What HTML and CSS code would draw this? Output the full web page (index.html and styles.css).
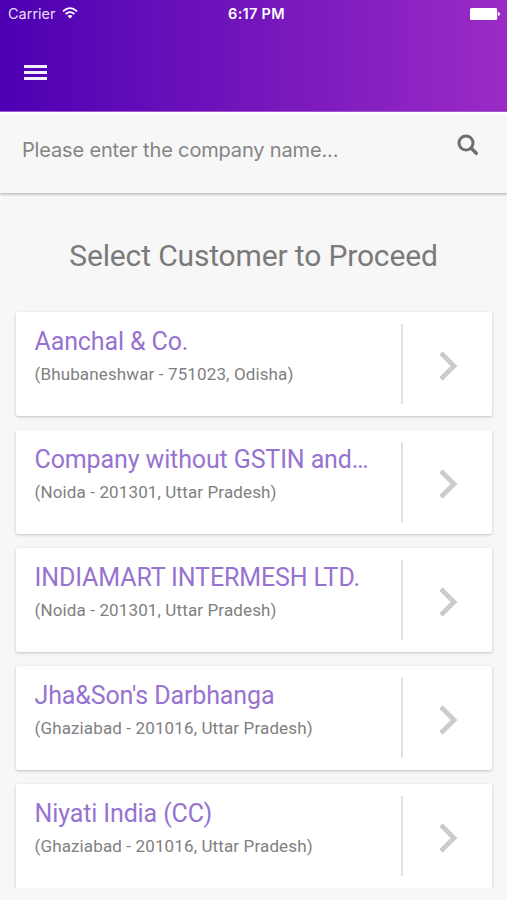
FILE: index.html
```html
<!DOCTYPE html>
<html lang="en">
<head>
<meta charset="utf-8">
<title>Select Customer</title>
<link rel="stylesheet" href="styles.css">
</head>
<body>
<svg class="symbols" aria-hidden="true">
  <symbol id="chevron" viewBox="0 0 20 30"><path d="M2 2L15 15L2 28" fill="none" stroke="currentColor" stroke-width="4.8"/></symbol>
</svg>
<header class="header">
  <div class="status">
    <div class="carrier"><span class="carrier-name">Carrier</span>
      <svg class="wifi" viewBox="0 0 16 12"><g fill="none" stroke="currentColor" stroke-width="1.8"><path d="M1 4.3Q8 -2 15 4.3"/><path d="M3.6 7Q8 3.2 12.4 7"/></g><path d="M5.5 8.9Q8 6.9 10.5 8.9L8 11.5Z" fill="currentColor"/></svg>
    </div>
    <time class="time">6:17 PM</time>
    <svg class="battery" viewBox="0 0 30 12"><rect width="27.2" height="12" rx="1.5" fill="currentColor"/><path d="M28 4Q30 4.4 30 6Q30 7.6 28 8Z" fill="currentColor"/></svg>
  </div>
  <button class="menu" aria-label="Menu"><span></span><span></span><span></span></button>
</header>
<form class="search">
  <span class="placeholder">Please enter the company name...</span>
  <svg class="search-icon" viewBox="0 0 22 22"><circle cx="9" cy="9" r="7" fill="none" stroke="currentColor" stroke-width="3"/><path d="M14 14L19.3 19.3" stroke="currentColor" stroke-width="3.4" stroke-linecap="round"/></svg>
</form>
<main class="content">
  <h1 class="heading">Select Customer to Proceed</h1>
  <ul class="list">
    <li class="card"><div class="info"><h2 class="name">Aanchal &amp; Co.</h2><p class="place">(Bhubaneshwar - 751023, Odisha)</p></div><div class="go"><svg class="chevron"><use href="#chevron"/></svg></div></li>
    <li class="card"><div class="info"><h2 class="name">Company without GSTIN and…</h2><p class="place">(Noida - 201301, Uttar Pradesh)</p></div><div class="go"><svg class="chevron"><use href="#chevron"/></svg></div></li>
    <li class="card"><div class="info"><h2 class="name">INDIAMART INTERMESH LTD.</h2><p class="place">(Noida - 201301, Uttar Pradesh)</p></div><div class="go"><svg class="chevron"><use href="#chevron"/></svg></div></li>
    <li class="card"><div class="info"><h2 class="name">Jha&amp;Son's Darbhanga</h2><p class="place">(Ghaziabad - 201016, Uttar Pradesh)</p></div><div class="go"><svg class="chevron"><use href="#chevron"/></svg></div></li>
    <li class="card"><div class="info"><h2 class="name">Niyati India (CC)</h2><p class="place">(Ghaziabad - 201016, Uttar Pradesh)</p></div><div class="go"><svg class="chevron"><use href="#chevron"/></svg></div></li>
  </ul>
</main>
</body>
</html>
```
FILE: styles.css
```css
* { box-sizing: border-box; margin: 0; padding: 0; }
body { height: 900px; overflow: hidden; background: #f7f7f7; color: #7a7a7a; font-family: Roboto, sans-serif; }
.symbols { display: none; }
.header { height: 112px; border-bottom: 1px solid #a355cf; background: linear-gradient(90deg, #4c00b3, #9b2bc5); color: #fff; }
.status { display: grid; grid-template-columns: 1fr auto 1fr; align-items: center; height: 27px; padding: 0 7px 0 8px; font-family: Inter, sans-serif; font-size: 14.5px; }
.carrier { display: flex; align-items: center; gap: 6px; color: #e9dcf7; }
.wifi { width: 16px; height: 12px; margin-top: -1px; color: #fff; }
.time { padding-left: 5px; font-weight: 600; letter-spacing: .3px; }
.battery { width: 30px; height: 12px; justify-self: end; }
.menu { display: flex; flex-direction: column; gap: 3px; width: 23px; margin: 38px 0 0 24px; border: 0; background: none; }
.menu span { width: 100%; height: 3px; background: #f4edfb; }
.search { display: flex; justify-content: space-between; height: 81px; padding: 0 28px 0 22px; border-top: 3px solid #fff; background: #f7f7f7; box-shadow: 0 2px 2px rgba(0, 0, 0, .2); }
.placeholder { padding-top: 22px; font-family: Inter, sans-serif; font-size: 20px; line-height: 26px; letter-spacing: -.16px; color: #858585; }
.search-icon { width: 22px; height: 22px; margin-top: 19px; color: #6f6f6f; }
.heading { margin-top: 43px; font-size: 30px; font-weight: 400; line-height: 40px; text-align: center; letter-spacing: -.15px; }
.list { height: 580px; margin-top: 32px; padding: 4px 15px 0 16px; overflow: hidden; list-style: none; }
.card { display: flex; height: 104px; margin-bottom: 14px; border-radius: 2px; background: #fff; box-shadow: 0 1px 3px rgba(0, 0, 0, .22); }
.card:last-child { height: 105px; }
.info { width: 385px; padding: 14px 0 0 18.5px; white-space: nowrap; }
.name { font-size: 25px; font-weight: 400; line-height: 32px; color: #9773d0; letter-spacing: -.12px; }
.place { margin-top: 5px; font-size: 17px; line-height: 22px; color: #808080; letter-spacing: .13px; }
.go { display: flex; align-items: center; width: 90px; height: 80px; margin-top: 12px; padding: 4px 0 0 36px; border-left: 2px solid #e2e2e2; }
.chevron { width: 20px; height: 30px; color: #ccc; }
```
